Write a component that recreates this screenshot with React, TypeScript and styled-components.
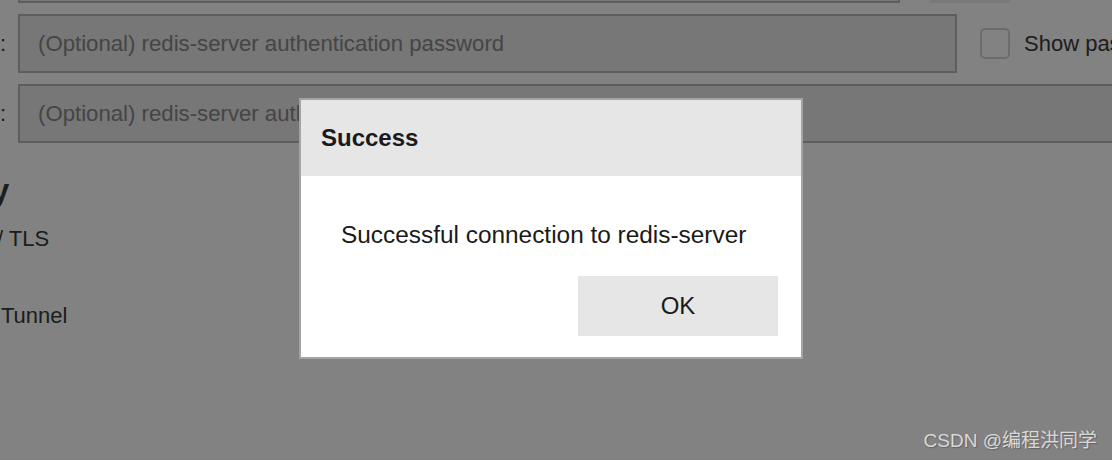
import React from "react";
import styled, { createGlobalStyle } from "styled-components";

const GlobalStyle = createGlobalStyle`
  html, body {
    margin: 0;
    padding: 0;
    width: 1112px;
    height: 460px;
    overflow: hidden;
    background: #ffffff;
  }
  * { box-sizing: border-box; }
  body {
    font-family: "Liberation Sans", Arial, Helvetica, sans-serif;
    color: #3a3a3a;
  }
`;

const Page = styled.div`
  width: 1112px;
  height: 460px;
  overflow: hidden;
  position: relative;
  background: #ffffff;
`;

const Form = styled.div`
  display: flex;
  flex-direction: column;
  gap: 11px;
  margin-top: -56px;
`;

const FieldRow = styled.div`
  display: flex;
  align-items: center;
  height: 59px;
`;

const Label = styled.div`
  width: 130px;
  margin-left: -124px;
  margin-right: 12px;
  flex: none;
  font-size: 22px;
  text-align: right;
  white-space: nowrap;
  color: #3a3a3a;
`;

const Input = styled.input<{ $width: number }>`
  flex: none;
  width: ${(p) => p.$width}px;
  height: 59px;
  border: 2px solid #b8b8b8;
  background: #e9e9e9;
  padding: 0 18px;
  font-family: "Liberation Sans", Arial, sans-serif;
  font-size: 22.2px;
  color: #3a3a3a;
  outline: none;
  &::placeholder {
    color: #888888;
  }
`;

const ButtonGroup = styled.div`
  display: flex;
  align-self: stretch;
  margin-left: 30px;
  height: 59px;
`;

const GroupButton = styled.div<{ $shade: string; $width: number }>`
  width: ${(p) => p.$width}px;
  height: 100%;
  background: ${(p) => p.$shade};
`;

const CheckLabel = styled.label`
  display: flex;
  align-items: center;
  gap: 14px;
  margin-left: 23px;
  font-size: 22px;
  white-space: nowrap;
  color: #3a3a3a;
`;

const CheckBox = styled.span`
  display: inline-block;
  width: 30px;
  height: 31px;
  border: 2px solid #d4d4d4;
  border-radius: 5px;
  background: #ffffff;
`;

const Section = styled.div`
  display: flex;
  flex-direction: column;
  margin-top: 27px;
`;

const SectionTitle = styled.h2`
  margin: 0 0 0 -117px;
  font-size: 32px;
  font-weight: 700;
  line-height: 40px;
  color: #3a3a3a;
  white-space: nowrap;
`;

const OptionList = styled.div`
  display: flex;
  flex-direction: column;
  gap: 49px;
  margin-top: 15px;
  margin-left: -50px;
`;

const Option = styled.div`
  font-size: 22px;
  line-height: 28px;
  white-space: nowrap;
  color: #3a3a3a;
`;

const Overlay = styled.div`
  position: absolute;
  inset: 0;
  background: rgba(0, 0, 0, 0.49);
  display: flex;
  align-items: center;
  justify-content: center;
  padding: 0 10px 4px 0;
`;

const Dialog = styled.div`
  width: 504px;
  border: 2px solid #a4a4a4;
  background: #ffffff;
  display: flex;
  flex-direction: column;
`;

const DialogHeader = styled.div`
  height: 76px;
  background: #e6e6e6;
  display: flex;
  align-items: center;
  padding: 0 20px;
  font-size: 24px;
  font-weight: 700;
  color: #1a1a1a;
`;

const DialogBody = styled.div`
  display: flex;
  flex-direction: column;
  padding: 45px 23px 21px 40px;
`;

const Message = styled.p`
  margin: 0;
  font-size: 24.4px;
  line-height: 28px;
  color: #1a1a1a;
`;

const Actions = styled.div`
  display: flex;
  justify-content: flex-end;
  margin-top: 27px;
`;

const OkButton = styled.button`
  width: 200px;
  height: 60px;
  border: none;
  background: #e6e6e6;
  font-family: "Liberation Sans", Arial, sans-serif;
  font-size: 24px;
  color: #1a1a1a;
  cursor: pointer;
`;

const Watermark = styled.div`
  position: absolute;
  right: 15px;
  bottom: 8px;
  font-family: "Liberation Sans", "Noto Sans CJK SC", sans-serif;
  font-size: 19px;
  color: rgba(235, 235, 235, 0.85);
  text-shadow: 1px 1px 1px rgba(0, 0, 0, 0.25);
  white-space: nowrap;
`;

export default function App() {
  return (
    <>
      <GlobalStyle />
      <Page>
        <Form>
          <FieldRow>
            <Label>Port:</Label>
            <Input $width={882} defaultValue="" placeholder="" readOnly />
            <ButtonGroup>
              <GroupButton $shade="#eeeeee" $width={80} />
              <GroupButton $shade="#ffffff" $width={110} />
            </ButtonGroup>
          </FieldRow>
          <FieldRow>
            <Label>Password:</Label>
            <Input
              $width={939}
              placeholder="(Optional) redis-server authentication password"
              readOnly
            />
            <CheckLabel>
              <CheckBox />
              Show password
            </CheckLabel>
          </FieldRow>
          <FieldRow>
            <Label>Username:</Label>
            <Input
              $width={1200}
              placeholder="(Optional) redis-server authentication username"
              readOnly
            />
          </FieldRow>
        </Form>
        <Section>
          <SectionTitle>Security</SectionTitle>
          <OptionList>
            <Option>SSL / TLS</Option>
            <Option>SSH Tunnel</Option>
          </OptionList>
        </Section>
        <Overlay>
          <Dialog>
            <DialogHeader>Success</DialogHeader>
            <DialogBody>
              <Message>Successful connection to redis-server</Message>
              <Actions>
                <OkButton>OK</OkButton>
              </Actions>
            </DialogBody>
          </Dialog>
        </Overlay>
        <Watermark>CSDN @编程洪同学</Watermark>
      </Page>
    </>
  );
}
